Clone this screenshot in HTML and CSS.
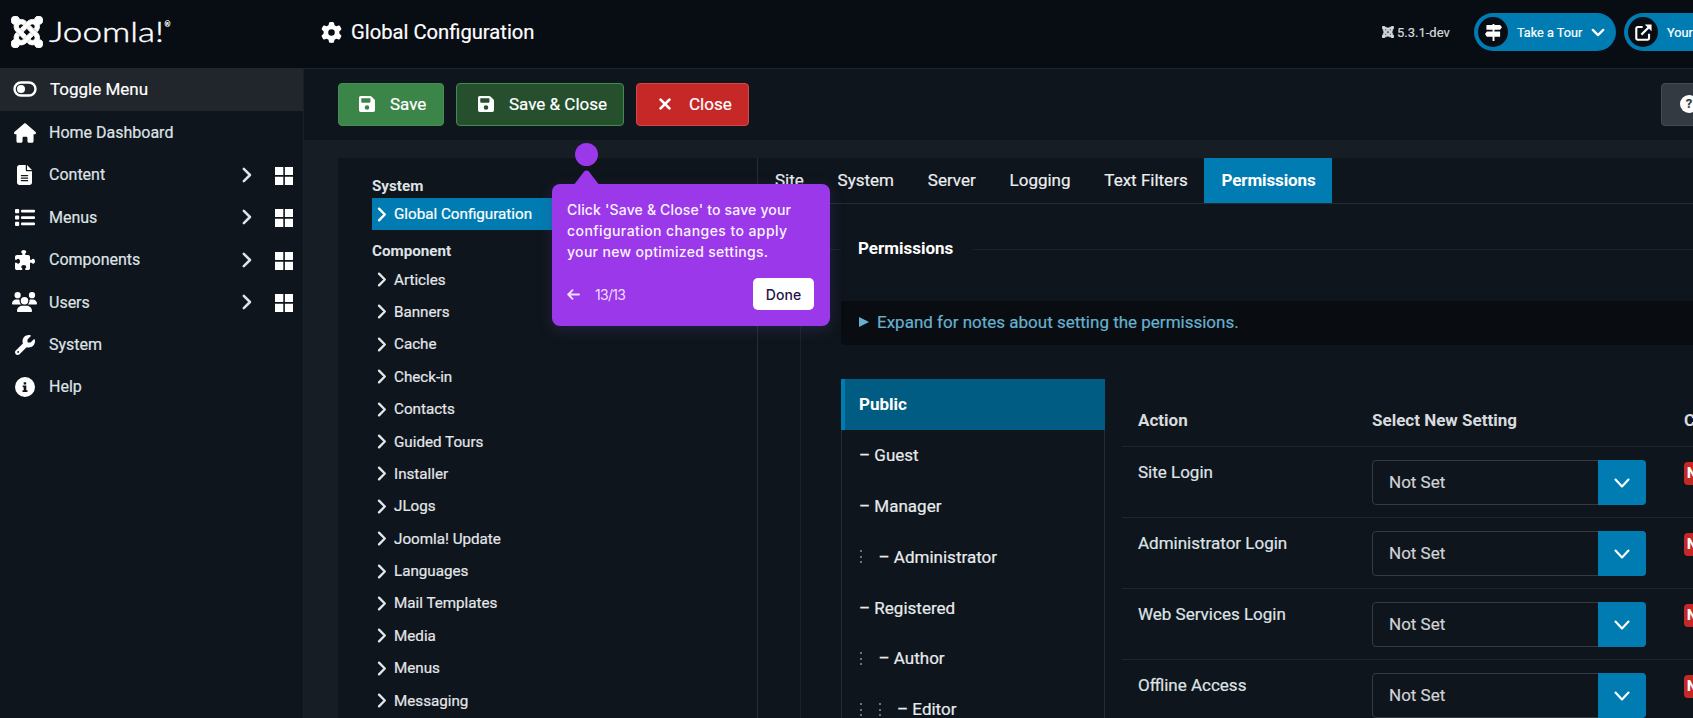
FILE: index.html
```html
<!DOCTYPE html>
<html lang="en">
<head>
    <meta charset="UTF-8">
    <meta name="viewport" content="width=device-width, initial-scale=1.0">
    <title>Global Configuration</title>
    <link rel="stylesheet" href="styles.css">
</head>
<body>
    <!-- icons -->
    <svg class="sprite">
        <symbol id="joomla" viewBox="0 32 448 448"><path d="M.6 92.1C.6 58.8 27.4 32 60.4 32c30 0 54.5 21.9 59.2 50.2 32.6-7.6 67.1.6 96.5 30l-44.3 44.3c-20.5-20.5-42.6-16.3-55.4-3.5-14.3 14.3-14.3 37.9 0 52.2l99.5 99.5-44 44.3c-87.7-87.2-49.7-49.7-99.8-99.7-26.8-26.5-35-64.8-24.8-98.9C20.4 144.6.6 120.7.6 92.1zm129.5 116.4l44.3 44.3c10-10 89.7-89.7 99.7-99.8 14.3-14.3 37.6-14.3 51.9 0 12.8 12.8 17 35-3.5 55.4l44 44.3c31.2-31.2 38.5-67.6 28.9-101.2 29.2-4.1 51.9-29.2 51.9-59.5 0-33.2-26.8-60.1-59.8-60.1-30.3 0-55.4 22.5-59.5 51.6-33.8-9.9-71.7-1.5-98.3 25.1-18.3 19.1-71.1 71.5-99.6 99.9zm266.3 152.2c8.2-32.7-.9-68.5-26.3-93.9-11.8-12.2 5 4.7-99.5-99.7l-44.3 44.3 99.7 99.7c14.3 14.3 14.3 37.6 0 51.9-12.8 12.8-35 17-55.4-3.5l-44 44.3c27.6 30.2 68 38.8 102.7 28 5.5 27.4 29.7 48.1 58.9 48.1 33 0 59.8-26.8 59.8-60.1 0-30.2-22.5-55-51.6-59.1zm-84.3-53.1l-44-44.3c-87 86.4-50.4 50.4-99.7 99.8-14.3 14.3-37.6 14.3-51.9 0-13.1-13.4-16.9-35.3 3.2-55.4l-44-44.3c-30.2 30.2-38 65.2-29.5 98.3-26.7 6-46.2 29.9-46.2 58.2C0 453.2 26.8 480 59.8 480c28.6 0 52.5-19.8 58.6-46.7 32.7 8.2 68.5-.6 94.2-26 32.1-32 12.2-12.4 99.5-99.7z"/></symbol>
        <symbol id="gear" viewBox="0 0 512 512"><path d="M495.9 166.6c3.2 8.7 .5 18.4-6.4 24.6l-43.3 39.4c1.1 8.3 1.7 16.8 1.7 25.4s-.6 17.1-1.7 25.4l43.3 39.4c6.9 6.2 9.6 15.9 6.4 24.6c-4.4 11.9-9.7 23.3-15.8 34.3l-4.7 8.1c-6.6 11-14 21.4-22.1 31.2c-5.9 7.2-15.7 9.6-24.5 6.8l-55.7-17.7c-13.4 10.3-28.2 18.9-44 25.4l-12.5 57.1c-2 9.1-9 16.3-18.2 17.8c-13.8 2.3-28 3.5-42.5 3.5s-28.7-1.2-42.5-3.5c-9.2-1.5-16.2-8.7-18.2-17.8l-12.5-57.1c-15.8-6.5-30.6-15.1-44-25.4L83.1 425.9c-8.8 2.8-18.6 .3-24.5-6.8c-8.1-9.8-15.5-20.2-22.1-31.2l-4.7-8.1c-6.1-11-11.4-22.4-15.8-34.3c-3.2-8.7-.5-18.4 6.4-24.6l43.3-39.4C64.6 273.1 64 264.6 64 256s.6-17.1 1.7-25.4L22.4 191.2c-6.9-6.2-9.6-15.9-6.4-24.6c4.4-11.9 9.7-23.3 15.8-34.3l4.7-8.1c6.6-11 14-21.4 22.1-31.2c5.9-7.2 15.7-9.6 24.5-6.8l55.7 17.7c13.4-10.3 28.2-18.9 44-25.4l12.5-57.1c2-9.1 9-16.3 18.2-17.8C227.3 1.2 241.5 0 256 0s28.7 1.2 42.5 3.5c9.2 1.5 16.2 8.7 18.2 17.8l12.5 57.1c15.8 6.5 30.6 15.1 44 25.4l55.7-17.7c8.8-2.8 18.6-.3 24.5 6.8c8.1 9.8 15.5 20.2 22.1 31.2l4.7 8.1c6.1 11 11.4 22.4 15.8 34.3zM256 336a80 80 0 1 0 0-160 80 80 0 1 0 0 160z"/></symbol>
        <symbol id="toggle" viewBox="0 0 24 16"><rect x="1.5" y="1.5" width="21" height="13" rx="6.5" fill="none" stroke="currentColor" stroke-width="2.4"/><circle cx="8" cy="8" r="4"/></symbol>
        <symbol id="home" viewBox="0 0 576 512"><path d="M575.8 255.5c0 18-15 32.1-32 32.1h-32l.7 160.2c0 2.7-.2 5.4-.5 8.1V472c0 22.1-17.9 40-40 40H456c-1.1 0-2.2 0-3.3-.1c-1.4 .1-2.8 .1-4.2 .1H416 392c-22.1 0-40-17.9-40-40V448 384c0-17.7-14.3-32-32-32H256c-17.7 0-32 14.3-32 32v64 24c0 22.1-17.9 40-40 40H160 128.1c-1.5 0-3-.1-4.5-.2c-1.2 .1-2.4 .2-3.6 .2H104c-22.1 0-40-17.9-40-40V360c0-.9 0-1.9 .1-2.8V287.6H32c-18 0-32-14-32-32.1c0-9 3-17 10-24L266.4 8c7-7 15-8 22-8s15 2 21 7L564.8 231.5c8 7 12 15 11 24z"/></symbol>
        <symbol id="file" viewBox="0 0 384 512"><path fill-rule="evenodd" d="M64 0C29 0 0 29 0 64V448c0 35 29 64 64 64H320c35 0 64-29 64-64V160H256c-18 0-32-14-32-32V0H64zM256 0V128H384L256 0zM112 256H272c9 0 16 7 16 16s-7 16-16 16H112c-9 0-16-7-16-16s7-16 16-16zm0 64H272c9 0 16 7 16 16s-7 16-16 16H112c-9 0-16-7-16-16s7-16 16-16zm0 64H272c9 0 16 7 16 16s-7 16-16 16H112c-9 0-16-7-16-16s7-16 16-16z"/></symbol>
        <symbol id="list" viewBox="0 0 20 17"><rect x="0" y="0" width="4.2" height="4.2" rx="1"/><rect x="0" y="6.4" width="4.2" height="4.2" rx="1"/><rect x="0" y="12.8" width="4.2" height="4.2" rx="1"/><rect x="6" y="0.8" width="14" height="2.7" rx="1"/><rect x="6" y="7.2" width="14" height="2.7" rx="1"/><rect x="6" y="13.6" width="14" height="2.7" rx="1"/></symbol>
        <symbol id="puzzle" viewBox="0 0 512 512"><path d="M192 104.8c0-9.2-5.8-17.3-13.2-22.8C167.2 73.3 160 61.3 160 48c0-26.5 28.7-48 64-48s64 21.5 64 48c0 13.3-7.2 25.3-18.8 34c-7.4 5.5-13.2 13.6-13.2 22.8v0c0 12.8 10.4 23.2 23.2 23.2H336c26.5 0 48 21.5 48 48v56.8c0 12.8 10.4 23.2 23.2 23.2v0c9.2 0 17.3-5.8 22.8-13.2c8.7-11.6 20.7-18.8 34-18.8c26.5 0 48 28.7 48 64s-21.5 64-48 64c-13.3 0-25.3-7.2-34-18.8c-5.5-7.4-13.6-13.2-22.8-13.2v0c-12.8 0-23.2 10.4-23.2 23.2V464c0 26.5-21.5 48-48 48H279.2c-12.8 0-23.2-10.4-23.2-23.2v0c0-9.2 5.8-17.3 13.2-22.8c11.6-8.7 18.8-20.7 18.8-34c0-26.5-28.7-48-64-48s-64 21.5-64 48c0 13.3 7.2 25.3 18.8 34c7.4 5.5 13.2 13.6 13.2 22.8v0c0 12.8-10.4 23.2-23.2 23.2H48c-26.5 0-48-21.5-48-48V343.2C0 330.4 10.4 320 23.2 320v0c9.2 0 17.3 5.8 22.8 13.2C54.7 344.8 66.7 352 80 352c26.5 0 48-28.7 48-64s-21.5-64-48-64c-13.3 0-25.3 7.2-34 18.8C40.5 250.2 32.4 256 23.2 256v0C10.4 256 0 245.6 0 232.8V176c0-26.5 21.5-48 48-48H168.8c12.8 0 23.2-10.4 23.2-23.2v0z"/></symbol>
        <symbol id="users" viewBox="0 0 640 512"><path d="M144 0a80 80 0 1 1 0 160A80 80 0 1 1 144 0zM512 0a80 80 0 1 1 0 160A80 80 0 1 1 512 0zM0 298.700C0 239.800 47.800 192 106.700 192h42.700c15.900 0 31 3.500 44.600 9.700-1.300 7.200-1.900 14.700-1.900 22.300 0 38.200 16.800 72.500 43.300 96H21.300C9.600 320 0 310.400 0 298.700zM405.300 320h-.7c26.600-23.500 43.300-57.800 43.300-96 0-7.600-.7-15-1.900-22.300 13.600-6.300 28.700-9.700 44.600-9.700h42.700C592.200 192 640 239.800 640 298.700c0 11.800-9.600 21.300-21.300 21.300H405.300zM224 224a96 96 0 1 1 192 0 96 96 0 1 1-192 0zM128 485.300C128 411.700 187.700 352 261.300 352H378.700C452.300 352 512 411.700 512 485.300c0 14.700-11.900 26.700-26.700 26.700H154.700c-14.700 0-26.700-11.900-26.700-26.700z"/></symbol>
        <symbol id="wrench" viewBox="0 0 512 512"><path d="M352 320c88.4 0 160-71.6 160-160c0-15.3-2.2-30.1-6.200-44.2c-3.1-10.8-16.4-13.2-24.3-5.300l-76.800 76.800c-3 3-7.100 4.700-11.300 4.700H336c-8.800 0-16-7.200-16-16V118.600c0-4.200 1.700-8.300 4.700-11.300l76.800-76.800c7.900-7.900 5.400-21.200-5.300-24.300C382.100 2.200 367.300 0 352 0C263.600 0 192 71.600 192 160c0 19.100 3.400 37.500 9.500 54.500L19.900 396.100C7.200 408.800 0 426.100 0 444.100C0 481.600 30.400 512 67.900 512c18 0 35.300-7.200 48-19.900L297.500 310.500c17 6.200 35.400 9.500 54.500 9.500zM80 408a24 24 0 1 1 0 48 24 24 0 1 1 0-48z"/></symbol>
        <symbol id="info" viewBox="0 0 20 20"><path fill-rule="evenodd" d="M10 0a10 10 0 1 1 0 20a10 10 0 1 1 0-20zM8.700 5.200v2.400h2.500V5.200zM7.700 8.600v1.700h1v2.900h-1.200v1.700h5v-1.700h-1.200V8.600z"/></symbol>
        <symbol id="chev" viewBox="0 0 10 16"><path d="M1.800 1.800L8 8l-6.200 6.200" fill="none" stroke="currentColor" stroke-width="2.500" stroke-linecap="round" stroke-linejoin="round"/></symbol>
        <symbol id="down" viewBox="0 0 16 10"><path d="M2 2l6 6l6-6" fill="none" stroke="currentColor" stroke-width="2.600" stroke-linecap="round" stroke-linejoin="round"/></symbol>
        <symbol id="caret" viewBox="0 0 16 10"><path d="M1.500 1.500l6.500 7l6.500-7" fill="none" stroke="currentColor" stroke-width="2.100" stroke-linecap="round" stroke-linejoin="round"/></symbol>
        <symbol id="grid" viewBox="0 0 18 18"><path d="M0 0h8.300v8.100H0zM9.900 0H18v8.100H9.900zM0 9.800h8.300V18H0zM9.900 9.800H18V18H9.900z"/></symbol>
        <symbol id="floppy" viewBox="0 0 448 448"><path fill-rule="evenodd" d="M48 0h266c12 0 24 5 34 14l86 86c9 10 14 22 14 34v266c0 27-21 48-48 48H48c-27 0-48-21-48-48V48C0 21 21 0 48 0zM64 64v104c0 13 11 24 24 24h208c13 0 24-11 24-24V64zM224 256a64 64 0 1 0 0 128 64 64 0 1 0 0-128z"/></symbol>
        <symbol id="times" viewBox="0 0 12 12"><path d="M1.600 1.600l8.800 8.800M10.400 1.600l-8.800 8.800" fill="none" stroke="currentColor" stroke-width="2.700" stroke-linecap="round"/></symbol>
        <symbol id="signs" viewBox="0 0 18 18"><path d="M8 0h2v1h6l2 2.500L16 6h-6v2h6v5.500h-6V18H8v-4.500H2L0 10.700 2 8h6V6H1.500V1H8z"/></symbol>
        <symbol id="external" viewBox="0 0 20 20"><path d="M9 3.500H3.300a1.800 1.800 0 0 0-1.800 1.800v11.400a1.800 1.800 0 0 0 1.800 1.800h11.400a1.800 1.800 0 0 0 1.800-1.800V11.500M7.500 12.500L16 4" fill="none" stroke="currentColor" stroke-width="2.500"/><path d="M11.500 0.500H19.500V8.500z"/></symbol>
        <symbol id="back" viewBox="0 0 13 11"><path d="M12 5.500H1.500M5.500 1.200L1.200 5.500l4.300 4.300" fill="none" stroke="currentColor" stroke-width="1.900" stroke-linecap="round" stroke-linejoin="round"/></symbol>
    </svg>

    <header class="header">
        <div class="logo">
            <svg class="logo-mark"><use href="#joomla"/></svg>
            <svg class="logo-text" width="124" height="32"><text x="0" y="25.500" textLength="115" lengthAdjust="spacingAndGlyphs">Joomla!</text><text class="reg" x="115.500" y="10.500">®</text></svg>
        </div>
        <div class="page-title">
            <svg class="i-gear"><use href="#gear"/></svg>
            <h1>Global Configuration</h1>
        </div>
        <div class="header-items">
            <div class="version"><svg><use href="#joomla"/></svg><span>5.3.1-dev</span></div>
            <div class="pill tour"><i><svg><use href="#signs"/></svg></i><span>Take a Tour</span><svg class="pill-arrow"><use href="#down"/></svg></div>
            <div class="pill site"><i><svg><use href="#external"/></svg></i><span>Your Site</span></div>
        </div>
    </header>

    <div class="wrapper">
        <nav class="sidebar">
            <div class="item toggle"><i><svg class="i-toggle"><use href="#toggle"/></svg></i><span>Toggle Menu</span></div>
            <div class="item"><i><svg class="i-home"><use href="#home"/></svg></i><span>Home Dashboard</span></div>
            <div class="item"><i><svg class="i-file"><use href="#file"/></svg></i><span>Content</span><svg class="more"><use href="#chev"/></svg><svg class="dash"><use href="#grid"/></svg></div>
            <div class="item"><i><svg class="i-list"><use href="#list"/></svg></i><span>Menus</span><svg class="more"><use href="#chev"/></svg><svg class="dash"><use href="#grid"/></svg></div>
            <div class="item"><i><svg class="i-puzzle"><use href="#puzzle"/></svg></i><span>Components</span><svg class="more"><use href="#chev"/></svg><svg class="dash"><use href="#grid"/></svg></div>
            <div class="item"><i><svg class="i-users"><use href="#users"/></svg></i><span>Users</span><svg class="more"><use href="#chev"/></svg><svg class="dash"><use href="#grid"/></svg></div>
            <div class="item"><i><svg class="i-wrench"><use href="#wrench"/></svg></i><span>System</span></div>
            <div class="item"><i><svg class="i-info"><use href="#info"/></svg></i><span>Help</span></div>
        </nav>

        <div class="main">
            <div class="toolbar">
                <button class="btn save"><svg><use href="#floppy"/></svg>Save</button>
                <button class="btn save-close"><svg><use href="#floppy"/></svg>Save &amp; Close</button>
                <button class="btn close"><svg><use href="#times"/></svg>Close</button>
                <button class="btn help"><b>?</b>Help</button>
            </div>

            <div class="card">
                <div class="components">
                    <h2>System</h2>
                    <ul>
                        <li class="current"><svg><use href="#chev"/></svg>Global Configuration</li>
                    </ul>
                    <h2 class="second">Component</h2>
                    <ul>
                        <li><svg><use href="#chev"/></svg>Articles</li>
                        <li><svg><use href="#chev"/></svg>Banners</li>
                        <li><svg><use href="#chev"/></svg>Cache</li>
                        <li><svg><use href="#chev"/></svg>Check-in</li>
                        <li><svg><use href="#chev"/></svg>Contacts</li>
                        <li><svg><use href="#chev"/></svg>Guided Tours</li>
                        <li><svg><use href="#chev"/></svg>Installer</li>
                        <li><svg><use href="#chev"/></svg>JLogs</li>
                        <li><svg><use href="#chev"/></svg>Joomla! Update</li>
                        <li><svg><use href="#chev"/></svg>Languages</li>
                        <li><svg><use href="#chev"/></svg>Mail Templates</li>
                        <li><svg><use href="#chev"/></svg>Media</li>
                        <li><svg><use href="#chev"/></svg>Menus</li>
                        <li><svg><use href="#chev"/></svg>Messaging</li>
                    </ul>
                </div>

                <div class="config">
                    <div class="tabs">
                        <a>Site</a><a>System</a><a>Server</a><a>Logging</a><a>Text Filters</a><a class="active">Permissions</a>
                    </div>
                    <fieldset>
                        <legend>Permissions</legend>
                        <div class="notes"><i></i>Expand for notes about setting the permissions.</div>
                        <div class="permissions">
                            <div class="groups">
                                <div class="group active">Public</div>
                                <div class="group">– Guest</div>
                                <div class="group">– Manager</div>
                                <div class="group"><em></em>– Administrator</div>
                                <div class="group">– Registered</div>
                                <div class="group"><em></em>– Author</div>
                                <div class="group"><em></em><em></em>– Editor</div>
                            </div>
                            <div class="table">
                                <div class="row head"><span>Action</span><span>Select New Setting</span><span>Calculated Setting</span></div>
                                <div class="row"><span>Site Login</span><div class="select"><span>Not Set</span><i><svg><use href="#caret"/></svg></i></div><span><b class="badge">Not Allowed</b></span></div>
                                <div class="row"><span>Administrator Login</span><div class="select"><span>Not Set</span><i><svg><use href="#caret"/></svg></i></div><span><b class="badge">Not Allowed</b></span></div>
                                <div class="row"><span>Web Services Login</span><div class="select"><span>Not Set</span><i><svg><use href="#caret"/></svg></i></div><span><b class="badge">Not Allowed</b></span></div>
                                <div class="row"><span>Offline Access</span><div class="select"><span>Not Set</span><i><svg><use href="#caret"/></svg></i></div><span><b class="badge">Not Allowed</b></span></div>
                            </div>
                        </div>
                    </fieldset>
                </div>
            </div>
        </div>
    </div>

    <!-- guided tour step -->
    <div class="beacon"></div>
    <div class="tip">
        <svg class="tip-arrow" viewBox="0 0 24 14"><path d="M0 14L9.500 1.500Q12 -1 14.500 1.500L24 14z"/></svg>
        <p><span class="l1">Click 'Save &amp; Close' to save your</span><br><span class="l2">configuration changes to apply</span><br><span class="l3">your new optimized settings.</span></p>
        <div class="tip-foot">
            <svg><use href="#back"/></svg>
            <span>13/13</span>
            <button>Done</button>
        </div>
    </div>
</body>
</html>
```
FILE: styles.css
```css
*{
    margin: 0;
    padding: 0;
    box-sizing: border-box;
}

html,body{
    height: 100%;
    overflow: hidden;
}

body{
    position: relative;
    display: flex;
    flex-direction: column;
    background: #171d24;
    color: #dfe3e7;
    font-family: Roboto, "Liberation Sans", sans-serif;
    font-size: 17px;
    -webkit-text-stroke: 0.2px;
}

svg{
    display: block;
    flex: none;
    fill: currentColor;
    overflow: visible;
}

.sprite{
    position: absolute;
    width: 0;
    height: 0;
}

button{
    font-family: inherit;
}

/* header */
.header{
    height: 69px;
    flex: none;
    display: flex;
    align-items: center;
    padding-bottom: 4px;
    background: #080c13;
    border-bottom: 1px solid #20262d;
    color: #fff;
}

.logo{
    width: 320px;
    flex: none;
    display: flex;
    align-items: center;
    padding-left: 11px;
}
.logo-mark{
    width: 32px;
    height: 32px;
    stroke: currentColor;
    stroke-width: 12px;
}
.logo-text{
    margin-left: 6px;
    font-family: Lato, sans-serif;
    font-weight: 300;
    font-size: 27px;
    stroke: currentColor;
    stroke-width: 0.400px;
}
.logo-text .reg{
    font-size: 7px;
}

.page-title{
    display: flex;
    align-items: center;
    gap: 9px;
    padding-left: 1px;
}
.i-gear{
    width: 21px;
    height: 21px;
}
.page-title h1{
    font-size: 20.200px;
    font-weight: 400;
}

.header-items{
    flex: none;
    width: 311px;
    margin-left: auto;
    display: flex;
    align-items: center;
}
.version{
    width: 92px;
    flex: none;
    display: flex;
    align-items: center;
    gap: 3px;
    color: #d5d9dc;
    font-size: 13px;
}
.version svg{
    width: 12px;
    height: 12px;
    stroke: currentColor;
    stroke-width: 24px;
}
.pill{
    flex: none;
    height: 38px;
    display: flex;
    align-items: center;
    border-radius: 19px;
    background: #007cb2;
    padding-left: 4px;
    font-size: 12.700px;
    white-space: nowrap;
}
.pill i{
    width: 30px;
    height: 30px;
    border-radius: 50%;
    background: #080c13;
    display: flex;
    align-items: center;
    justify-content: center;
    margin-right: 9px;
}
.pill i svg{
    width: 17px;
    height: 17px;
}
.tour{
    width: 142px;
    margin-right: 8px;
}
.site{
    width: 142px;
}
.pill-arrow{
    width: 14px;
    height: 9px;
    margin-left: 9px;
}

.wrapper{
    flex: 1;
    min-height: 0;
    display: flex;
}

/* sidebar */
.sidebar{
    width: 304px;
    flex: none;
    background: #0f151c;
    border-right: 1px solid #191f26;
}
.item{
    height: 42.400px;
    display: flex;
    align-items: center;
    font-size: 16px;
}
.item i{
    width: 49px;
    color: #fff;
}
.item i svg{
    margin: 0 auto;
}
.item span{
    flex: 1;
}
.toggle{
    background: #21262c;
    color: #fff;
    font-size: 17px;
    padding-bottom: 2px;
}
.toggle span{
    padding-left: 1px;
}
.more{
    width: 10px;
    height: 16px;
    margin-right: 23px;
}
.dash{
    width: 18px;
    height: 18px;
    margin: 2px 10px 0 0;
    color: #fff;
}
.i-toggle{ width: 24px; height: 16px; }
.i-home{ width: 22px; height: 20px; }
.i-file{ width: 15px; height: 20px; }
.i-list{ width: 20px; height: 17px; }
.i-puzzle{ width: 20px; height: 20px; }
.i-users{ width: 25px; height: 20px; }
.i-wrench{ width: 20px; height: 20px; }
.i-info{ width: 20px; height: 20px; }

/* toolbar */
.main{
    flex: 1;
    min-width: 0;
}
.toolbar{
    height: 71px;
    display: flex;
    align-items: flex-start;
    gap: 12px;
    padding: 13.500px 0 0 34px;
    background: #0f151c;
}
.btn{
    flex: none;
    height: 43.500px;
    display: flex;
    align-items: center;
    border: 1px solid #438f54;
    border-radius: 4px;
    padding-left: 20px;
    background: #3c8549;
    color: #fff;
    font-size: 17px;
    white-space: nowrap;
    -webkit-text-stroke: 0.2px;
}
.btn svg{
    width: 16px;
    height: 16px;
    margin-right: 15px;
}
.save{
    width: 106px;
}
.save-close{
    width: 168px;
    background: #264f2e;
    border-color: #3f8d4f;
    padding-left: 21px;
}
.close{
    width: 113px;
    background: #c52827;
    border-color: #d04a4a;
    padding-left: 22px;
}
.close svg{
    width: 12px;
    height: 12px;
    margin-right: 18px;
}
.help{
    margin-left: auto;
    margin-right: -68px;
    width: 100px;
    background: #343a41;
    border-color: #454b52;
    padding-left: 18px;
}
.help b{
    width: 18px;
    height: 18px;
    margin-right: 12px;
    border-radius: 50%;
    background: #fff;
    color: #343a41;
    font-size: 13px;
    line-height: 18px;
    text-align: center;
}

/* card */
.card{
    display: flex;
    height: 700px;
    margin: 18px 0 0 34px;
    background: #0f151c;
}
.components{
    width: 420px;
    flex: none;
    padding: 17px 34px 0 34px;
    border-right: 1px solid #272c33;
}
.components h2{
    height: 23px;
    line-height: 22px;
    font-size: 15.200px;
    font-weight: 700;
    -webkit-text-stroke: 0;
}
.components h2.second{
    margin-top: 9px;
    height: 24px;
    line-height: 25px;
}
.components ul{
    list-style: none;
}
.components li{
    height: 32.400px;
    display: flex;
    align-items: center;
    padding-left: 5px;
    font-size: 15.200px;
    color: #e4e7ea;
}
.components li svg{
    width: 10px;
    height: 15px;
    margin-right: 7px;
}
.components .current{
    background: #007cb2;
    color: #fff;
}

.config{
    flex: 1;
    min-width: 0;
}
.tabs{
    height: 46px;
    display: flex;
    border-bottom: 1px solid #272c33;
    color: #eceef0;
}
.tabs a{
    padding: 0 16.800px 0 17px;
    line-height: 44px;
    height: 45px;
}
.tabs .active{
    background: #007cb2;
    color: #fff;
    font-weight: 700;
    letter-spacing: -0.100px;
    -webkit-text-stroke: 0;
}

fieldset{
    margin: 33px -40px 0 42px;
    padding: 0 0 0 40px;
    border: 1px solid #1c2229;
    height: 600px;
}
legend{
    width: 132px;
    padding: 0 17px;
    height: 24px;
    line-height: 22px;
    color: #fff;
    font-weight: 700;
    -webkit-text-stroke: 0;
}
.notes{
    height: 44px;
    margin-top: 40px;
    display: flex;
    align-items: center;
    padding-left: 18px;
    padding-bottom: 2px;
    border-radius: 4px;
    background: #090d11;
    color: #66b1cf;
}
.notes i{
    margin-right: 8px;
    border-left: 10px solid #66b1cf;
    border-top: 5.500px solid transparent;
    border-bottom: 5.500px solid transparent;
}

.permissions{
    display: flex;
    gap: 17px;
    margin-top: 34px;
}
.groups{
    width: 264px;
    height: 500px;
    flex: none;
    border: 1px solid #272c33;
    border-top: 0;
}
.group{
    height: 50.800px;
    display: flex;
    align-items: center;
    padding-left: 17px;
    color: #e8ebed;
}
.group.active{
    background: #005c82;
    border-left: 4px solid #007cb2;
    margin: 0 -1px 0 -1px;
    padding-left: 14px;
    color: #fff;
    font-weight: 700;
    -webkit-text-stroke: 0;
}
/* dotted depth marker */
.group em{
    width: 2px;
    height: 13px;
    margin: 0 16.500px 0 1px;
    background: repeating-linear-gradient(#6c7278 0, #6c7278 2px, transparent 2px, transparent 5.500px);
}
.group em + em{
    margin-left: 0;
}

.table{
    flex: 1;
}
.row{
    height: 71px;
    display: grid;
    grid-template-columns: 234px 312px 200px;
    padding: 13px 0 0 16px;
    border-bottom: 1px solid #1f252c;
}
.row > span{
    line-height: 24px;
    white-space: nowrap;
}
.row.head{
    height: 68px;
    padding-top: 29px;
    font-weight: 700;
    color: #d8dbde;
    -webkit-text-stroke: 0;
}
.select{
    width: 274px;
    height: 45px;
    display: flex;
    border: 1px solid #343a41;
    border-radius: 4px;
}
.select span{
    flex: 1;
    padding-left: 16px;
    line-height: 42px;
    color: #cfd3d6;
}
.select i{
    width: 48px;
    margin: -1px;
    border-radius: 0 4px 4px 0;
    background: #007cb2;
    color: #fff;
    display: flex;
    align-items: center;
    justify-content: center;
}
.select svg{
    width: 16px;
    height: 10px;
}
.badge{
    display: inline-block;
    height: 23px;
    padding: 0 3px;
    line-height: 23px;
    margin-top: 2px;
    border-radius: 4px;
    background: #c52827;
    color: #fff;
    font-size: 14px;
}

/* tour popup */
.beacon{
    position: absolute;
    left: 575px;
    top: 143px;
    width: 23px;
    height: 23px;
    border-radius: 50%;
    background: #9a38ea;
}
.tip{
    position: absolute;
    left: 552px;
    top: 184px;
    width: 278px;
    height: 142px;
    padding: 15px 16px 0 15px;
    border-radius: 8px;
    background: #9a38ea;
    box-shadow: 0 4px 14px rgba(70, 60, 130, 0.350);
    color: #fbf3ff;
    font-family: Inter, sans-serif;
    font-size: 14px;
    font-weight: 500;
    -webkit-text-stroke: 0;
}
.tip-arrow{
    position: absolute;
    left: 22px;
    top: -14px;
    width: 25px;
    height: 15px;
    fill: #9a38ea;
}
.tip p{
    line-height: 21px;
    white-space: nowrap;
}
.l1{ letter-spacing: 0.170px; }
.l2{ letter-spacing: 0.420px; }
.l3{ letter-spacing: 0.320px; }
.tip-foot{
    display: flex;
    align-items: center;
    margin-top: 16px;
    font-weight: 400;
    color: #f0ddff;
}
.tip-foot svg{
    width: 13px;
    height: 11px;
    margin-right: 15px;
}
.tip-foot span{
    letter-spacing: -0.700px;
}
.tip-foot button{
    width: 61px;
    height: 32px;
    margin-left: auto;
    border: 0;
    border-radius: 5px;
    background: #fff;
    color: #1d1347;
    font-size: 14px;
    font-weight: 500;
    letter-spacing: 0.100px;
}
```
